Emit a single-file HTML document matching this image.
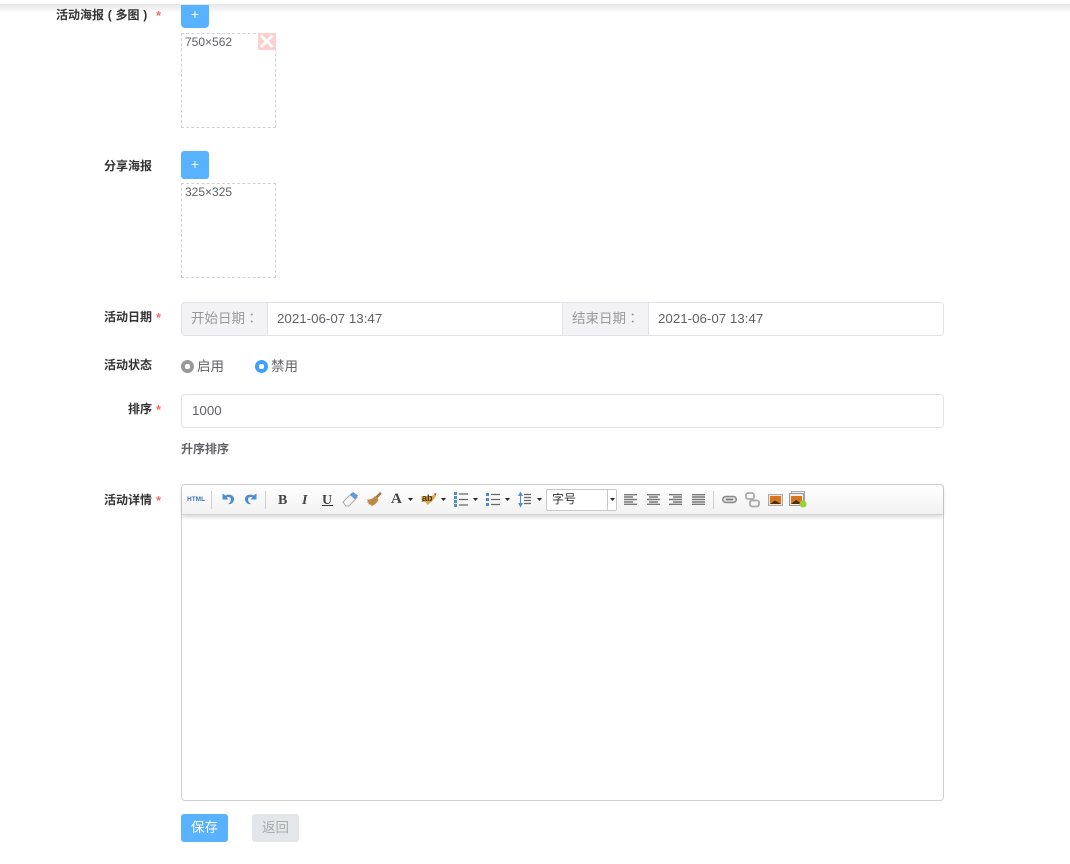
<!DOCTYPE html>
<html lang="zh"><head><meta charset="utf-8"><title>活动</title>
<style>
html,body{margin:0;padding:0;background:#fff}
body{position:relative;width:1070px;height:864px;overflow:hidden;font-family:"Liberation Sans","WenQuanYi Zen Hei","Noto Sans CJK SC",sans-serif;color:#606266}
.a{position:absolute;white-space:nowrap}
.lb{position:absolute;right:918px;font-size:12px;font-weight:bold;color:#333;line-height:16px;white-space:nowrap}
.st{position:absolute;left:156px;font-size:13px;color:#f56c6c;line-height:16px;font-weight:bold}
.btn{position:absolute;left:181px;width:28px;background:#58b2ff;color:#fff;border-radius:3px;text-align:center;font-size:14px;line-height:26px}
.dash{position:absolute;left:181px;width:93px;height:93px;border:1px dashed #d2d2d2;font-size:12px;color:#606266}
.dash span{position:absolute;left:3px;top:1px;line-height:14px;font-size:12px}
.box{position:absolute;border:1px solid #dcdfe6;border-radius:4px;box-sizing:border-box;font-size:13.330px;color:#606266}
.radio{position:absolute;width:13px;height:13px;border-radius:50%}
.radio:after{content:"";position:absolute;left:4px;top:4px;width:5px;height:5px;background:#fff;border-radius:2px}
svg{position:absolute;overflow:visible;filter:blur(.25px)}
.dd{width:5px;height:3px}
.col{font-family:"Noto Sans CJK TC",sans-serif;line-height:0}
</style></head><body>
<div class="a" style="left:0;top:4px;width:1070px;height:9px;background:linear-gradient(#e6e6e8,#fff)"></div>

<div class="lb" style="top:7px;left:56px;right:auto;word-spacing:.4px">活动海报 ( 多图 )</div><div class="st" style="top:8px">*</div>
<div class="btn" style="top:5px;height:23px;border-radius:0 0 4px 4px;line-height:19px">+</div>
<div class="dash" style="top:33px"><span>750×562</span>
<svg style="left:76px;top:-1px;filter:none" width="18" height="18" viewBox="0 0 18 18"><rect width="18" height="17" rx="1" fill="#fdd0d0"/><path d="M3 2.500L14.500 14M14.500 2.500L3 14" stroke="#fff" stroke-width="2.500"/></svg></div>

<div class="lb" style="top:158px">分享海报</div>
<div class="btn" style="top:151px;height:28px;line-height:27px">+</div>
<div class="dash" style="top:183px"><span>325×325</span></div>

<div class="lb" style="top:309px">活动日期</div><div class="st" style="top:310px">*</div>
<div class="box" style="left:181px;top:302px;width:763px;height:34px;border-color:#e0e2e8">
  <div class="a" style="left:0;top:0;width:85px;height:32px;background:#f3f3f5;border-right:1px solid #e0e2e8;border-radius:3px 0 0 3px;color:#999;line-height:32px;text-indent:9px;font-size:13.500px">开始日期<span class="col" lang="zh-TW">：</span></div>
  <div class="a" style="left:95px;top:0;line-height:31px">2021-06-07 13:47</div>
  <div class="a" style="left:380px;top:0;width:85px;height:32px;background:#f3f3f5;border-left:1px solid #e0e2e8;border-right:1px solid #e0e2e8;color:#999;line-height:32px;text-indent:9px;font-size:13.500px">结束日期<span class="col" lang="zh-TW">：</span></div>
  <div class="a" style="left:476px;top:0;line-height:31px">2021-06-07 13:47</div>
</div>

<div class="lb" style="top:357px">活动状态</div>
<div class="radio" style="left:181px;top:360px;background:#999"></div>
<div class="a" style="left:197px;top:358px;font-size:13.500px;line-height:17px">启用</div>
<div class="radio" style="left:255px;top:360px;background:#409eff"></div>
<div class="a" style="left:271px;top:358px;font-size:13.500px;line-height:17px">禁用</div>

<div class="lb" style="top:401px">排序</div><div class="st" style="top:402px">*</div>
<div class="box" style="left:181px;top:394px;width:763px;height:34px;border-color:#e0e2e8;line-height:31px;padding-left:10px">1000</div>
<div class="a" style="left:181px;top:441px;font-size:12px;font-weight:bold;color:#606266;line-height:16px">升序排序</div>

<div class="lb" style="top:492px">活动详情</div><div class="st" style="top:493px">*</div>
<div class="box" style="left:181px;top:484px;width:763px;height:317px;border-color:#d0d0d0"></div>
<div class="a" style="left:182px;top:485px;width:761px;height:29px;border-radius:4px 4px 0 0;background:linear-gradient(#fff,#f2f2f2);border-bottom:1px solid #d4d4d4;box-shadow:0 2px 4px rgba(0,0,0,.16)"></div>

<!-- toolbar -->
<div class="a" style="left:187px;top:496px;font-size:6.500px;font-weight:bold;color:#3e78b8;line-height:8px">HTML</div>
<div class="a" style="left:211px;top:491px;width:1px;height:18px;background:#cfcfcf"></div>
<svg style="left:221px;top:492px" width="14" height="14" viewBox="0 0 14 14"><path d="M1.500 1.500V7.500H7.500L5.500 5.300C8 4.300 10 5.500 10 7.500C10 9.300 8.800 10.800 7 12C10.300 12.800 13 10.300 13 7C13 3.500 8.800 1.200 4.500 3.500Z" fill="#4c8fd0"/></svg>
<svg style="left:244px;top:492px" width="14" height="14" viewBox="0 0 14 14"><path d="M12.500 1.500V7.500H6.500L8.500 5.300C6 4.300 4 5.500 4 7.500C4 9.300 5.200 10.800 7 12C3.700 12.800 1 10.300 1 7C1 3.500 5.200 1.200 9.500 3.500Z" fill="#4c8fd0"/></svg>
<div class="a" style="left:265px;top:491px;width:1px;height:18px;background:#cfcfcf"></div>
<div class="a" style="left:278px;top:493px;font:bold 14px/15px 'Liberation Serif',serif;color:#444">B</div>
<div class="a" style="left:302px;top:493px;font:italic bold 14px/15px 'Liberation Serif',serif;color:#444">I</div>
<div class="a" style="left:322px;top:493px;font:bold 14px/15px 'Liberation Serif',serif;color:#444">U</div>
<div class="a" style="left:322px;top:505px;width:11px;height:1px;background:#333"></div>
<svg style="left:342px;top:491px" width="17" height="16" viewBox="0 0 17 16"><path d="M1 11L9.500 2.500L15 6.500L7 15H4Z" fill="#f6f6f6" stroke="#a8a8a8"/><path d="M8 4L11 1L16 4.500L13 8.500Z" fill="#5d9ae0"/></svg>
<svg style="left:366px;top:491px" width="16" height="16" viewBox="0 0 16 16"><path d="M9.500 5.500L14 1L15.800 2.500L11.500 7.500Z" fill="#a67a3d"/><path d="M0.500 8.500C4 9 7 7.500 9 5L12.500 8.500C11 12 8 14.500 5.500 15L5 13.500L4 14.500L3.500 12.800L2 13.500L2.800 11.500L1 11.500L2 10Z" fill="#bd8a45"/></svg>
<div class="a" style="left:391px;top:492px;font:bold 15px/15px 'Liberation Serif',serif;color:#444">A</div>
<svg class="dd" style="left:408px;top:498px" viewBox="0 0 5 3"><path d="M0 0H5L2.500 3Z" fill="#222"/></svg>
<svg style="left:421px;top:492px" width="16" height="14" viewBox="0 0 16 14"><path d="M0.500 4H11L14.500 1.500L15 4L11 9.500L6.500 13L4.500 10H0.500Z" fill="#d8a94f"/><path d="M13 1L15.500 1.500L14.500 4Z" fill="#d6453a"/></svg>
<div class="a" style="left:422px;top:494px;font:bold 9px/9px 'Liberation Sans',sans-serif;color:#4a3410">ab</div>
<svg class="dd" style="left:441px;top:498px" viewBox="0 0 5 3"><path d="M0 0H5L2.500 3Z" fill="#222"/></svg>
<svg style="left:454px;top:491px" width="14" height="17" viewBox="0 0 14 17"><path d="M0 1H3V4H0ZM0 5H3V8H0ZM0 9H3V12H0ZM0 13H3V16H0Z" fill="#4c8fd0"/><path d="M5 3H14M5 8.500H14M5 14H14" stroke="#666" stroke-width="1.300"/></svg>
<svg class="dd" style="left:473px;top:498px" viewBox="0 0 5 3"><path d="M0 0H5L2.500 3Z" fill="#222"/></svg>
<svg style="left:486px;top:492px" width="14" height="15" viewBox="0 0 14 15"><path d="M0 1H3V4H0ZM0 6H3V9H0ZM0 11H3V14H0Z" fill="#4c8fd0"/><path d="M5 2.500H14M5 7.500H14M5 12.500H14" stroke="#666" stroke-width="1.300"/></svg>
<svg class="dd" style="left:505px;top:498px" viewBox="0 0 5 3"><path d="M0 0H5L2.500 3Z" fill="#222"/></svg>
<svg style="left:518px;top:491px" width="14" height="17" viewBox="0 0 14 17"><path d="M2.500 0.500L5 5H0ZM2.500 16.500L5 12H0Z" fill="#4c8fd0"/><path d="M2.500 4V13" stroke="#4c8fd0"/><path d="M6 3.500H13M6 6.500H13M6 9.500H13M6 12.500H13" stroke="#666" stroke-width="1.300"/></svg>
<svg class="dd" style="left:537px;top:498px" viewBox="0 0 5 3"><path d="M0 0H5L2.500 3Z" fill="#222"/></svg>
<div class="a" style="left:546px;top:489px;width:69px;height:20px;border:1px solid #c8c8c8;border-radius:2px;background:#fff"></div>
<div class="a" style="left:552px;top:492px;font-size:12px;line-height:15px;color:#333">字号</div>
<div class="a" style="left:607px;top:490px;width:1px;height:20px;background:#c8c8c8"></div>
<svg class="dd" style="left:610px;top:498px" viewBox="0 0 5 3"><path d="M0 0H5L2.500 3Z" fill="#222"/></svg>
<svg style="left:624px;top:494px" width="13" height="11" viewBox="0 0 13 11"><path d="M0 .7H13M0 3H9M0 5.500H13M0 8H9M0 10.300H13" stroke="#777" stroke-width="1.400"/></svg>
<svg style="left:647px;top:494px" width="13" height="11" viewBox="0 0 13 11"><path d="M0 .7H13M2 3H11M0 5.500H13M2 8H11M0 10.300H13" stroke="#777" stroke-width="1.400"/></svg>
<svg style="left:669px;top:494px" width="13" height="11" viewBox="0 0 13 11"><path d="M0 .7H13M4 3H13M0 5.500H13M4 8H13M0 10.300H13" stroke="#777" stroke-width="1.400"/></svg>
<svg style="left:692px;top:494px" width="13" height="11" viewBox="0 0 13 11"><path d="M0 .7H13M0 3H13M0 5.500H13M0 8H13M0 10.300H13" stroke="#777" stroke-width="1.400"/></svg>
<div class="a" style="left:713px;top:491px;width:1px;height:18px;background:#cfcfcf"></div>
<svg style="left:722px;top:495px" width="15" height="9" viewBox="0 0 15 9"><rect x=".8" y="1.500" width="13.500" height="6" rx="3" fill="#ddd" stroke="#8a8a8a" stroke-width="1.500"/><path d="M4 4.500H11" stroke="#777" stroke-width="1.500"/></svg>
<svg style="left:745px;top:492px" width="15" height="16" viewBox="0 0 15 16"><rect x="1" y="1" width="8" height="6" rx="2" fill="none" stroke="#aaa" stroke-width="1.800"/><rect x="5" y="8.500" width="9" height="6" rx="2" fill="none" stroke="#aaa" stroke-width="1.800"/><path d="M5 7L9 9" stroke="#aaa" stroke-width="1.800"/></svg>
<svg style="left:768px;top:494px" width="15" height="12" viewBox="0 0 15 12"><rect x=".5" y=".5" width="14" height="11" fill="#f0e6d8" stroke="#aaa"/><rect x="2" y="2" width="11" height="8" fill="#d9751e"/><path d="M2 10L7 6.500L13 10Z" fill="#4a2d10"/></svg>
<svg style="left:789px;top:491px" width="18" height="17" viewBox="0 0 18 17"><rect x="2.500" y=".5" width="13" height="11" fill="#eee" stroke="#aaa"/><rect x=".5" y="2.500" width="14" height="12" fill="#eee" stroke="#999"/><rect x="2" y="5" width="11" height="8" fill="#d9751e"/><path d="M2 13L7 9L13 13Z" fill="#4a2d10"/><circle cx="14" cy="13" r="3.500" fill="#9ccb3b"/></svg>

<div class="a" style="left:181px;top:814px;width:47px;height:28px;background:#58b2ff;border-radius:3px;color:#fff;font-size:13.500px;line-height:28px;text-align:center">保存</div>
<div class="a" style="left:252px;top:814px;width:47px;height:28px;background:#e3e7ea;border-radius:3px;color:#aaa;font-size:13.500px;line-height:28px;text-align:center">返回</div>
</body></html>
